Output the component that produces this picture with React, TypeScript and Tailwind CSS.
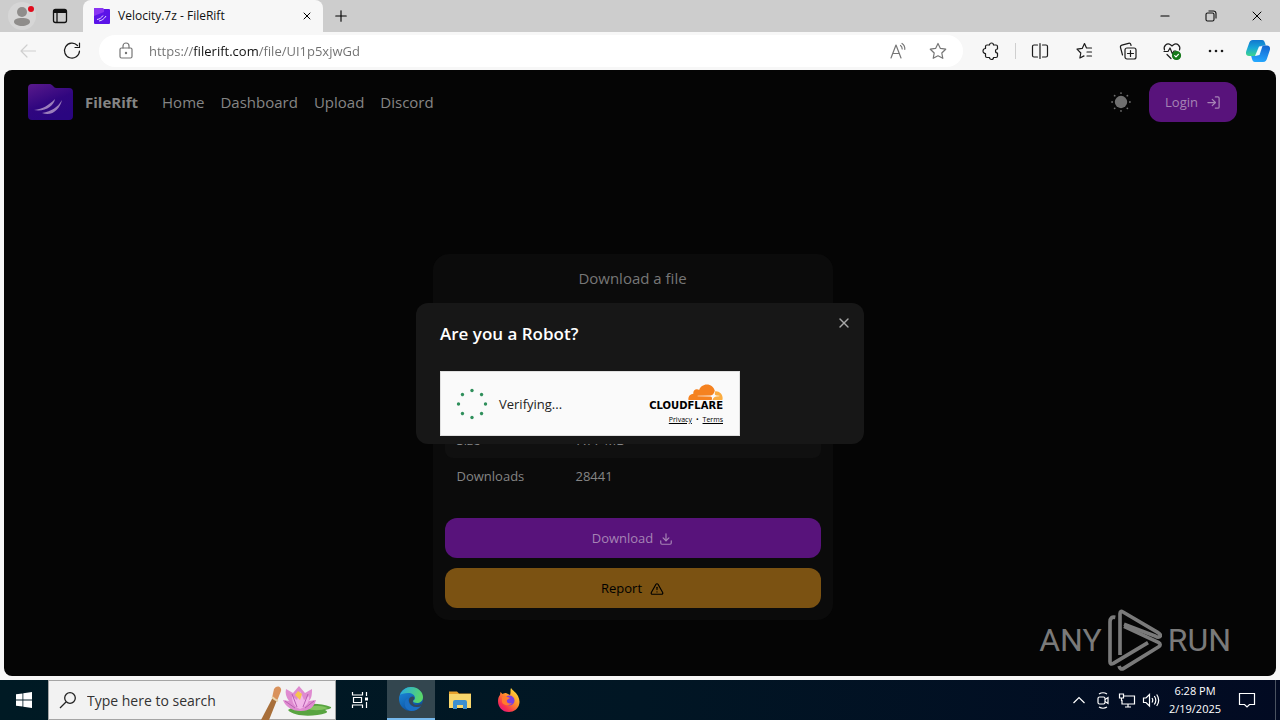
import type { ReactNode } from "react";
import { Download, LogIn, Minus, Plus, TriangleAlert, X } from "lucide-react";

const navLinks = ["Home", "Dashboard", "Upload", "Discord"];

const fileInfo = [
  { label: "Size", value: "7.77 MB" },
  { label: "Downloads", value: "28441" },
];

const FolderLogo = ({ className }: { className: string }) => (
  <svg viewBox="0 0 45 36" className={className}>
    <defs>
      <linearGradient id="folder" x1="0" y1="0" x2="0.5" y2="1">
        <stop offset="0" stopColor="#5a1a8c" />
        <stop offset="0.6" stopColor="#30067f" />
        <stop offset="1" stopColor="#2a0580" />
      </linearGradient>
    </defs>
    <path
      d="M4 0h18c2 0 4 4 6 4h13a4 4 0 0 1 4 4v24a4 4 0 0 1-4 4H4a4 4 0 0 1-4-4V4a4 4 0 0 1 4-4z"
      fill="url(#folder)"
    />
    <path
      d="M6 26c9-1 15-5 21-11-1 7-10 13-21 11zM14 29c10-2 15-5 20-13-2 9-10 17-20 13z"
      fill="#9b7dbb"
    />
  </svg>
);

const TabLogo = () => (
  <svg viewBox="0 0 16 16" className="size-4 shrink-0">
    <path
      d="M1 0h7l2 1h5a1 1 0 0 1 1 1v13a1 1 0 0 1-1 1H1a1 1 0 0 1-1-1V1a1 1 0 0 1 1-1z"
      fill="#5b13e8"
    />
    <path d="M0 1a1 1 0 0 1 1-1h7l2 1v3L0 8z" fill="#8a35f2" />
    <path
      d="M3 11.5c3-.5 4-1.5 6-4M5 13c3-.5 5-2 7-5"
      stroke="#e4d4ff"
      fill="none"
    />
  </svg>
);

// 20x20 outline icons used by the browser toolbar
const ToolIcon = ({ children }: { children: ReactNode }) => (
  <svg
    viewBox="0 0 20 20"
    className="size-5"
    fill="none"
    stroke="currentColor"
    strokeWidth="1.2"
    strokeLinecap="round"
    strokeLinejoin="round"
  >
    {children}
  </svg>
);

const ToolButton = ({
  label,
  children,
}: {
  label: string;
  children: ReactNode;
}) => (
  <button
    aria-label={label}
    className="flex h-8 w-11 shrink-0 items-center justify-center text-[#1b1b1b]"
  >
    {children}
  </button>
);

const TabStrip = () => (
  <div className="flex h-8 bg-[#cdcdcd]">
    <div className="flex w-[83px] items-center">
      <button
        aria-label="Profile"
        className="relative ml-2 flex size-7 items-center justify-center rounded-full bg-[#d6d6d6]"
      >
        <svg viewBox="0 0 18 20" className="h-5 w-[18px]" fill="#8f8d8b">
          <circle cx="9" cy="6" r="5" />
          <path d="M1 16c0-3 3-4 8-4s8 1 8 4c0 2-4 4-8 4s-8-2-8-4z" />
        </svg>
        <span className="absolute top-1 right-0.5 size-1.5 rounded-full bg-[#e00b1c]" />
      </button>
      <button aria-label="Tab actions" className="ml-3.5">
        <svg
          viewBox="0 0 20 20"
          className="size-5"
          fill="none"
          stroke="#111"
          strokeWidth="1.3"
        >
          <rect x="3.5" y="3.5" width="13" height="13" rx="2" />
          <path d="M4 5.5h12" strokeWidth="3" />
          <path d="M7 7v9.5" />
        </svg>
      </button>
    </div>
    <div className="flex w-60 items-center rounded-t-lg bg-[#f7f7f7] pr-2.5 pl-[11px]">
      <TabLogo />
      <span className="ml-2 flex-1 text-[12px] text-[#111]">
        Velocity.7z - FileRift
      </span>
      <button aria-label="Close tab">
        <X className="size-3" strokeWidth={2} />
      </button>
    </div>
    <button
      aria-label="New tab"
      className="flex w-9 items-center justify-center"
    >
      <Plus className="size-[18px]" strokeWidth={1.5} />
    </button>
    <div className="ml-auto flex">
      <button
        aria-label="Minimize"
        className="flex w-[46px] items-center justify-center"
      >
        <Minus className="size-3.5" strokeWidth={1.8} />
      </button>
      <button
        aria-label="Restore"
        className="flex w-[46px] items-center justify-center"
      >
        <svg
          viewBox="0 0 12 12"
          className="size-3"
          fill="none"
          stroke="#111"
          strokeWidth="1.1"
        >
          <rect x="1" y="3" width="8" height="8" rx="1.5" />
          <path d="M3.5 1h5A2.5 2.5 0 0 1 11 3.5v5" />
        </svg>
      </button>
      <button
        aria-label="Close"
        className="flex w-[46px] items-center justify-center"
      >
        <X className="size-4" strokeWidth={1.5} />
      </button>
    </div>
  </div>
);

const Toolbar = () => (
  <div className="flex h-[38px] items-center pl-1.5">
    <button
      aria-label="Back"
      disabled
      className="flex h-8 w-11 items-center justify-center text-[#cfcfcf]"
    >
      <ToolIcon>
        <path d="M17.500 10H3M9 4 3 10 9 16" />
      </ToolIcon>
    </button>
    <ToolButton label="Refresh">
      <ToolIcon>
        <path d="M15.5 4.5A7.5 7.5 0 1 0 17.5 10M17.5 2v4.5H13" />
      </ToolIcon>
    </ToolButton>
    <div className="mr-1.5 ml-[5px] flex h-8 flex-1 items-center rounded-full bg-white pl-[17px] text-[#767676]">
      <ToolIcon>
        <rect x="4" y="7" width="12" height="10" rx="1.5" />
        <path d="M7 7V5a3 3 0 0 1 6 0v2" />
        <circle cx="10" cy="12" r="0.6" fill="currentColor" />
      </ToolIcon>
      <input
        type="text"
        aria-label="Address"
        defaultValue="https://filerift.com/file/UI1p5xjwGd"
        className="ml-[13px] flex-1 bg-[linear-gradient(to_right,#6f6f6f_45px,#111_45px,#111_109px,#6f6f6f_109px)] bg-clip-text pt-px text-[13px] text-transparent outline-none"
      />
      <button
        aria-label="Read aloud"
        className="flex w-10 items-center justify-center"
      >
        <ToolIcon>
          <path d="M3 17 8 4l5 13M5 12.5h6.500M12.5 4.5c1.2.8 1.7 2 1.7 3.5M14 2.5c2 1.3 3 3.2 2.8 5.8" />
        </ToolIcon>
      </button>
      <button
        aria-label="Add to favorites"
        className="mr-[5px] flex w-10 items-center justify-center"
      >
        <ToolIcon>
          <path d="m10 2.5 2.400 4.9 5.3.8-3.9 3.8 1 5.3-4.800-2.5-4.8 2.5 1-5.3-3.9-3.8 5.300-.8z" />
        </ToolIcon>
      </button>
    </div>
    <ToolButton label="Extensions">
      <ToolIcon>
        <path d="M6 4h2.5a2 2 0 0 1 4 0H15a1.5 1.5 0 0 1 1.500 1.500V8a2 2 0 1 0 0 4v3a1.500 1.500 0 0 1-1.500 1.500h-2.500a2 2 0 0 1-4 0H6A1.500 1.500 0 0 1 4.500 15v-2.500a2.500 2.500 0 0 1 0-5V5.500A1.500 1.500 0 0 1 6 4z" />
      </ToolIcon>
    </ToolButton>
    <span className="mx-0.5 h-4 w-px bg-[#cfcfcf]" />
    <ToolButton label="Split screen">
      <ToolIcon>
        <path d="M7.5 4H4a1.500 1.500 0 0 0-1.500 1.500v9A1.500 1.500 0 0 0 4 16h3.500M12.500 4H16a1.500 1.500 0 0 1 1.500 1.500v9A1.500 1.500 0 0 1 16 16h-3.500M10 2.500v15" />
      </ToolIcon>
    </ToolButton>
    <ToolButton label="Favorites">
      <ToolIcon>
        <path d="M17.500 7h-5l-2-4.500-2.300 4.900-5.200.8L6.800 12l-.9 5 4.100-2.100M13 11h4.500M13 15h4.500" />
      </ToolIcon>
    </ToolButton>
    <ToolButton label="Collections">
      <ToolIcon>
        <rect x="7" y="7" width="11" height="11" rx="2" />
        <path d="M12.500 9.500v6M9.500 12.500h6M4.500 14 2.500 6.500a2 2 0 0 1 1.400-2.400l6.600-1.800a2 2 0 0 1 2.400 1.400l.1.800" />
      </ToolIcon>
    </ToolButton>
    <ToolButton label="Browser essentials">
      <ToolIcon>
        <path d="M2.500 9C1 5 5 1.500 8.500 3.700L10 5l1.500-1.300C15 1.500 19 5 17.500 9M2 10.500h4l2-3.500 2.500 6 1.500-3h2M5 13.500l4 4" />
        <circle cx="14.5" cy="14.5" r="4" fill="#16791b" stroke="#16791b" />
        <path d="m12.700 14.600 1.300 1.300 2.400-2.600" stroke="#fff" />
      </ToolIcon>
    </ToolButton>
    <ToolButton label="Settings and more">
      <svg viewBox="0 0 20 20" className="size-5" fill="currentColor">
        <circle cx="4" cy="10" r="1.3" />
        <circle cx="10" cy="10" r="1.3" />
        <circle cx="16" cy="10" r="1.3" />
      </svg>
    </ToolButton>
    <button
      aria-label="Copilot"
      className="flex w-[42px] items-center justify-center pr-0.5"
    >
      <svg viewBox="0 0 24 22" className="h-[22px] w-6">
        <defs>
          <linearGradient id="cpA" x1="0.3" y1="0" x2="0.3" y2="1">
            <stop offset="0" stopColor="#1277cf" />
            <stop offset="0.5" stopColor="#18a7d8" />
            <stop offset="1" stopColor="#3fd58c" />
          </linearGradient>
          <linearGradient id="cpB" x1="0.5" y1="0" x2="0.3" y2="1">
            <stop offset="0" stopColor="#1568d3" />
            <stop offset="1" stopColor="#25a9ff" />
          </linearGradient>
        </defs>
        <path
          d="M7 0h9c2 0 2.500 1.500 3 3l.8 2.500h-3c-2 0-3 1-3.600 3l-1.500 5c-.5 2-1.500 2.500-3.500 2.500H3c-3 0-3.500-2.500-2.700-5L2.800 4C3.600 1.500 4.500 0 7 0z"
          fill="url(#cpA)"
        />
        <path
          d="M17 22H9c-2 0-2.500-1.500-3-3l-.8-3h3c2 0 3-1 3.600-3l1.500-5c.5-2 1.500-2.500 3.500-2.500H21c3 0 3.500 2.500 2.700 5L21.200 18c-.8 2.500-1.700 4-4.200 4z"
          fill="url(#cpB)"
        />
        <path d="m13 6.500 3.500-.5-3 9-4.500 1z" fill="#f3fbff" />
      </svg>
    </button>
  </div>
);

const Header = () => (
  <header className="flex h-16 items-center px-6 text-[#858585]">
    <FolderLogo className="h-9 w-[45px]" />
    <span className="ml-3 text-[15px] font-bold">FileRift</span>
    <nav className="ml-6 flex gap-4 text-[15px]">
      {navLinks.map((link) => (
        <a key={link} href="#">
          {link}
        </a>
      ))}
    </nav>
    <button aria-label="Toggle theme" className="ml-auto">
      <svg viewBox="0 0 22 22" className="size-5" fill="#6f6f6f">
        <circle cx="11" cy="11" r="6.8" />
        <circle cx="11" cy="1.200" r="1" />
        <circle cx="11" cy="20.800" r="1" />
        <circle cx="1.200" cy="11" r="1" />
        <circle cx="20.800" cy="11" r="1" />
        <circle cx="4" cy="4" r="1" />
        <circle cx="18" cy="4" r="1" />
        <circle cx="4" cy="18" r="1" />
        <circle cx="18" cy="18" r="1" />
      </svg>
    </button>
    <button className="ml-[18px] flex h-10 items-center gap-2 rounded-xl bg-[#58137b] px-4 pt-px text-[13px] text-[#a684b5]">
      Login
      <LogIn className="size-[15px]" strokeWidth={2} />
    </button>
  </header>
);

const DownloadCard = () => (
  <section className="mx-auto mt-30 w-full max-w-[400px] rounded-2xl bg-[#0b0b0b] p-3">
    <h1 className="text-center text-[15px] leading-6 text-[#777777]">
      Download a file
    </h1>
    <table className="mt-[132px] w-full text-left text-[13px] text-[#858585]">
      <tbody>
        {fileInfo.map((row) => (
          <tr key={row.label} className="h-9 odd:bg-[#101010]">
            <th
              scope="row"
              className="w-[119px] rounded-l-lg pt-0.5 pl-3 font-normal"
            >
              {row.label}
            </th>
            <td className="rounded-r-lg pt-0.5 pl-3">{row.value}</td>
          </tr>
        ))}
      </tbody>
    </table>
    <div className="mt-6 flex flex-col gap-2.5 text-[13px]">
      <button className="flex h-10 items-center justify-center gap-1.5 rounded-xl bg-[#58137b] pt-px text-[#a684b5]">
        Download
        <Download className="size-3.5" />
      </button>
      <button className="flex h-10 items-center justify-center gap-2 rounded-xl bg-[#7b5212] pt-px text-black">
        Report
        <TriangleAlert className="size-3.5" />
      </button>
    </div>
  </section>
);

const Turnstile = () => (
  <div className="flex h-[65px] w-[300px] items-center border border-[#e0e0e0] bg-[#fafafa] pt-0.5 pr-4 pl-[15px] text-[#232323]">
    <svg viewBox="0 0 32 32" className="size-8" fill="#2f8f5b">
      {[0, 45, 90, 135, 180, 225, 270, 315].map((angle) => (
        <circle
          key={angle}
          cx="16"
          cy="2.5"
          r="1.7"
          transform={`rotate(${angle} 16 16)`}
        />
      ))}
    </svg>
    <span className="ml-[11px] pt-0.5 text-[13px]">Verifying...</span>
    <div className="ml-auto flex flex-col items-end pt-0.5">
      <svg viewBox="0 6.3 24 11.2" className="h-4 w-[35px]">
        <path
          fill="#f58220"
          d="M16.5088 16.8447c.1475-.5068.0908-.9707-.1553-1.3154-.2246-.3164-.6045-.499-1.0615-.5205l-8.6592-.1123a.1559.1559 0 0 1-.1333-.0713c-.0283-.042-.0351-.0986-.021-.1553.0278-.084.1123-.1484.2036-.1562l8.7359-.1123c1.0351-.0489 2.1601-.8868 2.5537-1.9136l.499-1.3013c.0215-.0561.0293-.1128.0147-.168-.5625-2.5463-2.835-4.4453-5.5499-4.4453-2.5039 0-4.6284 1.6177-5.3876 3.8614-.4927-.3658-1.1187-.5625-1.794-.499-1.2026.119-2.1665 1.083-2.2861 2.2856-.0283.31-.0069.6128.0635.894C1.5683 13.171 0 14.7754 0 16.752c0 .1748.0142.3515.0352.5273.0141.083.0844.1475.1689.1475h15.9814c.0909 0 .1758-.0645.2032-.1553l.12-.4268z"
        />
        <path
          fill="#fbad41"
          d="M19.2656 11.2813c-.0771 0-.1611 0-.2383.0112-.0566 0-.1054.0415-.127.0976l-.3378 1.1744c-.1475.5068-.0918.9707.1543 1.3164.2256.3164.6055.498 1.0625.5195l1.8437.1133c.0557 0 .1055.0263.1329.0703.0283.043.0351.1074.0214.1562-.0283.084-.1132.1485-.204.1553l-1.921.1123c-1.041.0488-2.1582.8867-2.5527 1.914l-.1406.3585c-.0283.0713.0215.1416.0986.1416h6.5977c.0771 0 .1474-.0489.169-.126.1122-.4082.1757-.837.1757-1.2803 0-2.6025-2.125-4.727-4.7344-4.727"
        />
      </svg>
      <span className="font-['DejaVu_Sans',sans-serif] text-[10px] leading-3 font-bold text-black">
        CLOUDFLARE
      </span>
      <div className="mt-0.5 flex gap-1 text-[7px] leading-3 text-black">
        <a href="#" className="underline">
          Privacy
        </a>
        <span>•</span>
        <a href="#" className="underline">
          Terms
        </a>
      </div>
    </div>
  </div>
);

const RobotDialog = () => (
  <div className="absolute inset-0 flex items-center justify-center">
    <div
      role="dialog"
      aria-labelledby="robot-title"
      className="relative w-full max-w-md rounded-xl bg-[#171717] px-6 pt-[17px] pb-2"
    >
      <h2
        id="robot-title"
        className="mb-[23px] text-[17px] leading-7 font-semibold text-white"
      >
        Are you a Robot?
      </h2>
      <Turnstile />
      <button aria-label="Close" className="absolute top-3 right-3 text-[#a8a8a8]">
        <X className="size-4" strokeWidth={2} />
      </button>
    </div>
  </div>
);

const Watermark = () => (
  <div className="pointer-events-none absolute right-[45px] bottom-[5px] flex items-center gap-1.5 font-['Roboto',sans-serif] text-[32px] leading-none text-[#7a7a7a]">
    <span>ANY</span>
    <svg
      viewBox="270 28 162 186"
      className="h-[62px] w-[54px]"
      fill="none"
      stroke="#7a7a7a"
      strokeWidth="11"
      strokeLinejoin="round"
    >
      <path d="M292 53q-16-3-16 14v119q0 10 10 5l104-62" />
      <path d="M306 166V42q0-10 9-5l104 61q13 8 6 13-5 3-12-1l-95-36" />
      <path d="m318 80 103 48q11 7 0 14l-104 64q-10 6-14-7" />
    </svg>
    <span>RUN</span>
  </div>
);

const Lotus = () => (
  <svg viewBox="-4 0 76 40" className="h-10 w-[76px]">
    <path d="M-2 40 10 17l4 3L6 40z" fill="#a86f3a" />
    <path d="m9 18 2-9c3-5 8-2 7 2l-4 10z" fill="#d9925c" />
    <path d="M9 17q3 3 6 4" stroke="#e9d6b0" strokeWidth="2" fill="none" />
    <path
      d="M25 30c8-6 28-9 43-3 1 2-4 2-6 3 2 1 3 2 1 3-12 4-32 4-38-3z"
      fill="#58a441"
    />
    <path d="M43 28c8-3 14-3 22 0-8 3-16 3-22 0z" fill="#82c45f" />
    <path
      d="M38 31C28 31 22 26 20 20l6 1c-3-4-4-8-3-12l7 4 6-7 6 7 7-4c0 4 0 9-3 12l7-1c-2 7-6 11-15 11z"
      fill="#df8bd0"
    />
    <path
      d="M37 29c-6-2-8-7-8-13l5 4 3-9 4 9 5-4c1 6-3 11-9 13z"
      fill="#f2b6e8"
    />
    <path d="m22 21 10 7M51 21l-9 7M29 14l5 13M45 14l-5 13" stroke="#b85fb3" />
    <path d="m32 15 3-4 4 3-2 6z" fill="#f6c64d" />
  </svg>
);

const EdgeIcon = () => (
  <svg viewBox="0 0 24 24" className="size-6">
    <defs>
      <linearGradient id="edgeTop" x1="0" y1="0" x2="1" y2="0.3">
        <stop offset="0" stopColor="#25a9e8" />
        <stop offset="1" stopColor="#58d66a" />
      </linearGradient>
      <linearGradient id="edgeLow" x1="0" y1="0" x2="0.6" y2="1">
        <stop offset="0" stopColor="#1d8fe0" />
        <stop offset="1" stopColor="#0c4fa0" />
      </linearGradient>
    </defs>
    <circle cx="12" cy="12" r="12" fill="url(#edgeLow)" />
    <path
      d="M1 8C3 3 7 0 12 0c7 0 12 5 12 10 0 4-3 6-6 6-2 0-4-1-4-2s2-1 2-3c0-3-3-5-7-5C5 6 2 7 1 8z"
      fill="url(#edgeTop)"
    />
    <path
      d="M9 12c0 5 4 8 9 8 2 0 3-.5 4-1-2 3-6 5-10 5-5-1-7-5-6-9 .4-2 2-4 3-3z"
      fill="#1b6fc4"
    />
    <path
      d="M14 14c-1 2 1 4 4 4 2 0 4-1 5-2l-1 3c-6 3-13-1-12-7 1-2 3-3 5-2 1 2-1 3-1 4z"
      fill="#35475a"
    />
  </svg>
);

const ExplorerIcon = () => (
  <svg viewBox="0 0 22 20" className="h-5 w-[22px]">
    <path d="M0 1.500h8l2 2h12V17H0z" fill="#e8a22c" />
    <path d="M0 4h22v14H0z" fill="#f8d66c" />
    <path d="M4 19v-7q0-2 2-2h10q2 0 2 2v7h-4v-4H8v4z" fill="#3b8ed0" />
    <path d="M8 15h6v3H8z" fill="#f8d66c" />
  </svg>
);

const FirefoxIcon = () => (
  <svg viewBox="0 0 24 24" className="size-6">
    <defs>
      <linearGradient id="fox" x1="0.9" y1="0.1" x2="0.2" y2="1">
        <stop offset="0" stopColor="#ffe03a" />
        <stop offset="0.45" stopColor="#ff8a2b" />
        <stop offset="0.8" stopColor="#f7304f" />
        <stop offset="1" stopColor="#e31587" />
      </linearGradient>
    </defs>
    <path
      d="M14 0c2 3 5 4 7 8 1.500 3 2 6 1 9-1.500 4-5 7-10 7C5 24 1 19 1 13c0-3 1-5 2-6l.5-3 2 2C7 5 8 5 9 5l4 2c1-3 0-5 1-7z"
      fill="url(#fox)"
    />
    <circle cx="12.5" cy="12.5" r="5" fill="#7a3fe0" />
    <path d="M5 9c3-2 6 0 8 1-1 1-2 1-3 2-1 3 2 4 5 3-2 3-9 3-10-1z" fill="#ff7b2d" />
  </svg>
);

const TrayButton = ({
  label,
  children,
}: {
  label: string;
  children: ReactNode;
}) => (
  <button aria-label={label} className="flex w-6 items-center justify-center">
    <svg
      viewBox="0 0 18 18"
      className="size-[18px]"
      fill="none"
      stroke="#fff"
      strokeWidth="1.2"
    >
      {children}
    </svg>
  </button>
);

const Taskbar = () => (
  <footer className="flex h-10 bg-linear-to-r from-[#001a24] via-[#011624] to-[#020a22]">
    <button aria-label="Start" className="flex w-12 items-center justify-center">
      <svg viewBox="0 0 16 16" className="size-4" fill="#fff">
        <path d="M0 2.300 6.500 1.400v6.200H0zM7.300 1.300 16 0v7.600H7.300zM0 8.400h6.500v6.200L0 13.700zM7.300 8.400H16V16l-8.700-1.200z" />
      </svg>
    </button>
    <label className="flex w-72 items-center border border-[#a5a5a5] bg-[#f2f2f2] pl-2.5">
      <svg
        viewBox="0 0 18 18"
        className="size-[18px] shrink-0"
        fill="none"
        stroke="#222"
        strokeWidth="1.3"
      >
        <circle cx="11" cy="7" r="5.3" />
        <path d="M7 11 1 17" />
      </svg>
      <input
        type="text"
        aria-label="Search"
        placeholder="Type here to search"
        className="ml-2.5 min-w-0 flex-1 text-[14px] outline-none placeholder:text-[#333]"
      />
      <Lotus />
    </label>
    <button
      aria-label="Task view"
      className="flex w-[51px] items-center justify-center pr-1"
    >
      <svg
        viewBox="0 0 18 18"
        className="size-[18px]"
        fill="none"
        stroke="#fff"
        strokeWidth="1.2"
      >
        <path d="M1.500 1v3h10V1M1.500 17v-3h10v3M2.500 6.500h8v5h-8zM15.500 1v4M15.500 11v6" />
        <path d="M14 6.500h3v3h-3z" fill="#fff" stroke="none" />
      </svg>
    </button>
    <div className="flex gap-px">
      <button
        aria-label="Microsoft Edge"
        className="flex w-12 items-center justify-center border-b-2 border-[#76b9ed] bg-[#33464f]"
      >
        <EdgeIcon />
      </button>
      <button
        aria-label="File Explorer"
        className="flex w-12 items-center justify-center"
      >
        <ExplorerIcon />
      </button>
      <button
        aria-label="Firefox"
        className="flex w-12 items-center justify-center"
      >
        <FirefoxIcon />
      </button>
    </div>
    <div className="ml-auto flex text-white">
      <TrayButton label="Show hidden icons">
        <path d="m3.500 12 5.500-5.500 5.500 5.500" />
      </TrayButton>
      <TrayButton label="Meet now">
        <rect x="4" y="6" width="7" height="7" rx="1.5" />
        <path d="m11 8.500 3-2v6l-3-2M5 3q4-2.500 8 0M5 16q4 2.500 8 0" />
      </TrayButton>
      <TrayButton label="Network">
        <path d="M6 5h10.500v8H4V9M10 13v3M7 16h6M1.500 3h4v4h-4zM3.500 7v3" />
      </TrayButton>
      <TrayButton label="Volume">
        <path d="M1.500 7v4.500H4l3.500 3.500V3.500L4 7zM10 7q1.500 2.200 0 4.500M12.300 5q3 4.200 0 8.500M14.700 3.500q4 5.700 0 11.500" />
      </TrayButton>
      <button className="w-16 text-center text-[11px] leading-[18px]">
        <span className="block">6:28 PM</span>
        <span className="block">2/19/2025</span>
      </button>
      <button
        aria-label="Notifications"
        className="flex w-10 items-center justify-center"
      >
        <svg
          viewBox="0 0 18 18"
          className="size-[18px]"
          fill="none"
          stroke="#fff"
          strokeWidth="1.2"
        >
          <path d="M1.500 2.500h15v11h-5L9 16l-2.500-2.500h-5z" />
        </svg>
      </button>
      <span className="mr-1 ml-2 w-px bg-[#4a5260]" />
    </div>
  </footer>
);

const App = () => {
  return (
    <div className="flex min-h-screen flex-col bg-[#f7f7f7] font-['Open_Sans','Noto_Sans',sans-serif]">
      <TabStrip />
      <Toolbar />
      <div className="relative mx-1 mb-1 flex-1 overflow-hidden rounded-lg bg-[#050505]">
        <div className="pr-[15px]">
          <Header />
          <main>
            <DownloadCard />
          </main>
        </div>
        <RobotDialog />
        <Watermark />
      </div>
      <Taskbar />
    </div>
  );
};

export default App;
